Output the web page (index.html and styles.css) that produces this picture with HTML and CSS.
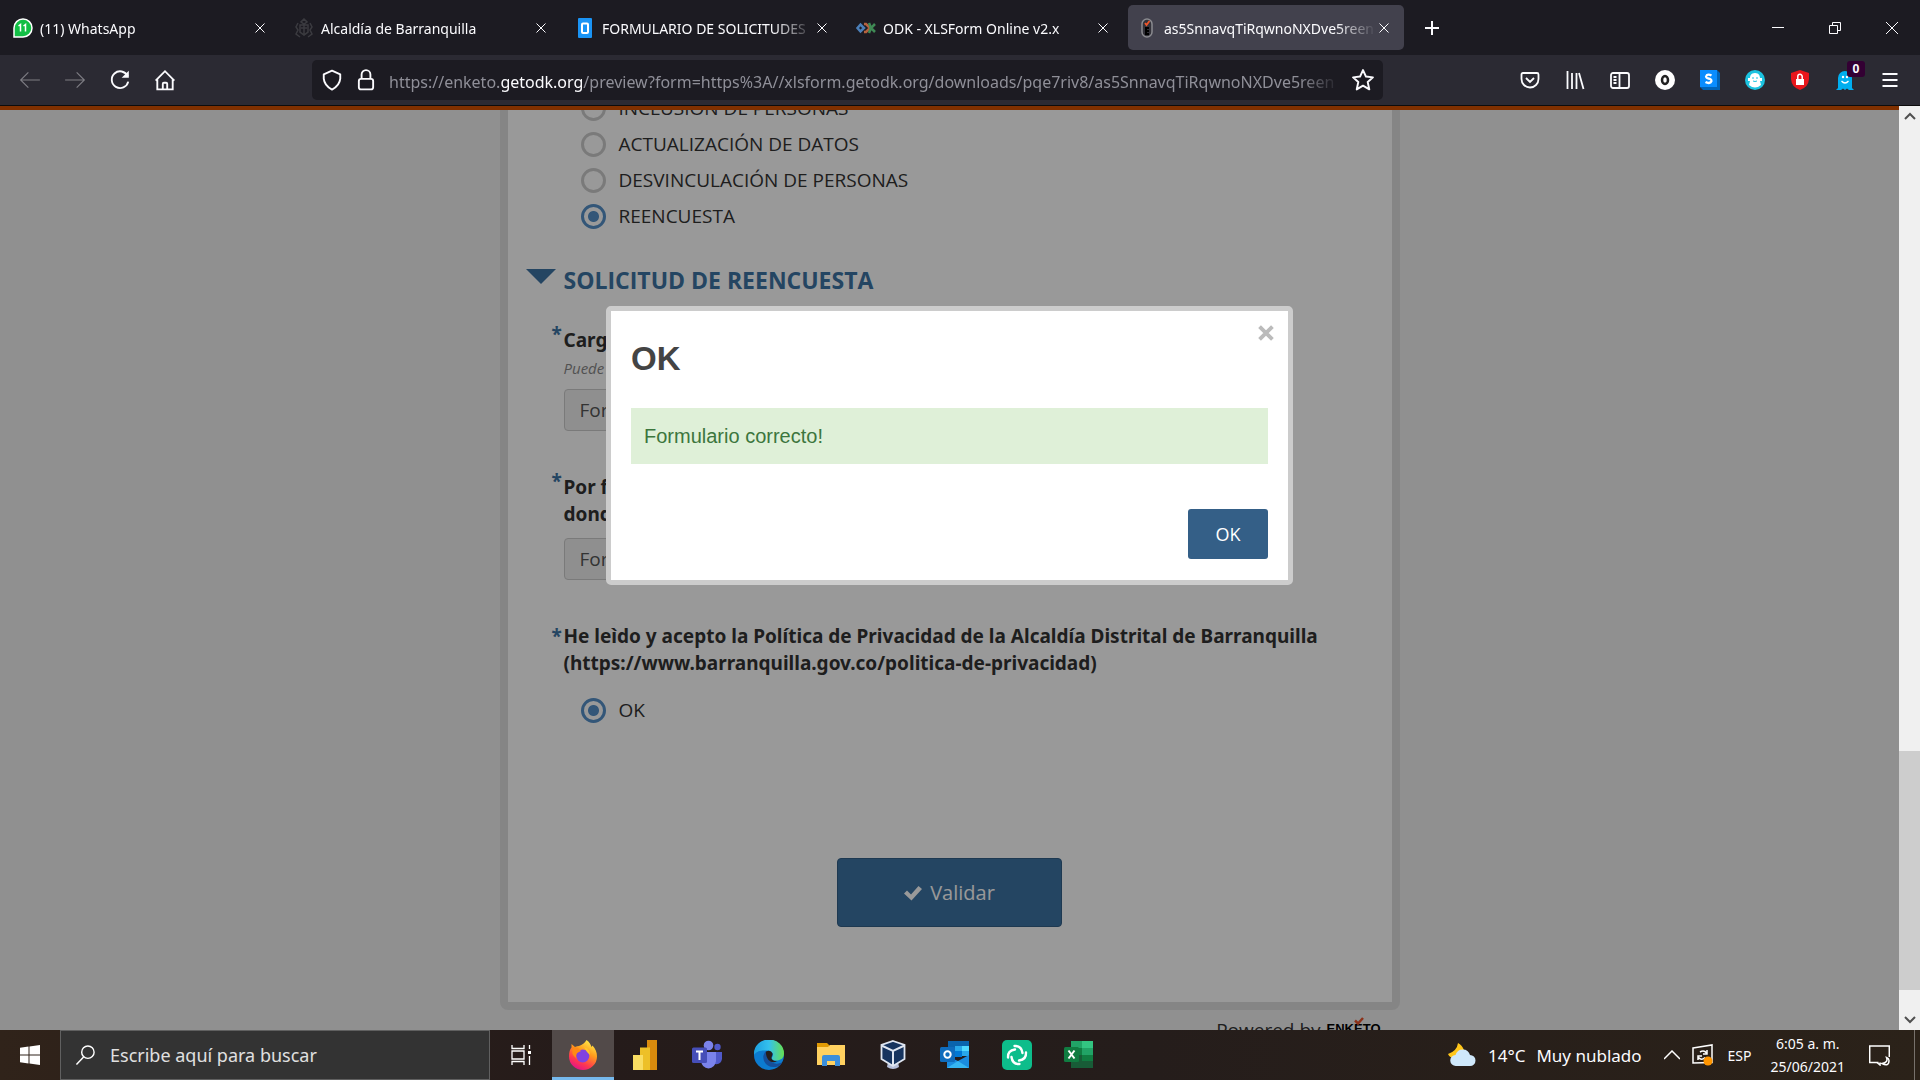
FILE: index.html
```html
<!DOCTYPE html>
<html lang="es">
<head>
<meta charset="utf-8">
<meta name="viewport" content="width=device-width, initial-scale=1">
<title>Formulario</title>
<link rel="stylesheet" href="styles.css">
</head>
<body>
<header class="browser">
  <div class="tabbar">
    <div class="tab">
      <svg class="favicon" viewBox="0 0 20 20"><path d="M1 19V10a9 9 0 1 1 9 9z" fill="#12bf45" stroke="#fff" stroke-width="1.5"/><path d="M5.500 8l2-1.500v7M10.500 8l2-1.500v7" fill="none" stroke="#fff" stroke-width="1.500"/></svg>
      <span class="tab-title">(11) WhatsApp</span>
      <button class="tab-close" aria-label="Cerrar"><svg viewBox="0 0 10 10"><path d="M.5.5l9 9M9.500.5l-9 9"/></svg></button>
    </div>
    <div class="tab">
      <svg class="favicon" viewBox="0 0 20 20" fill="none" stroke="#3b3b40" stroke-width="1.500"><path d="M10 1l3 3-3 2-3-2zM6 7h8v7l-4 3-4-3zM4 5l-2 4 2 3-2 4 4 3M16 5l2 4-2 3 2 4-4 3M7 10h6M10 7v9"/></svg>
      <span class="tab-title">Alcaldía de Barranquilla</span>
      <button class="tab-close" aria-label="Cerrar"><svg viewBox="0 0 10 10"><path d="M.5.5l9 9M9.500.5l-9 9"/></svg></button>
    </div>
    <div class="tab">
      <svg class="favicon" viewBox="0 0 20 20"><rect x="3" width="14" height="20" rx="1" fill="#1a94f5"/><rect x="7" y="5.500" width="6" height="9.500" rx="1" fill="none" stroke="#fff" stroke-width="2"/></svg>
      <span class="tab-title">FORMULARIO DE SOLICITUDES</span>
      <button class="tab-close" aria-label="Cerrar"><svg viewBox="0 0 10 10"><path d="M.5.5l9 9M9.500.5l-9 9"/></svg></button>
    </div>
    <div class="tab">
      <svg class="favicon" viewBox="0 0 20 20" fill="none" stroke-width="2.500"><path d="M1.500 10L4.500 6.500 8 10l-3.500 3.500z" stroke="#4b7fb8"/><path d="M8 6h2l4 4-4 4H8" stroke="#b5623f"/><path d="M19 6l-4 4 4 4M13 5l2 5-2 5" stroke="#3f8a55"/></svg>
      <span class="tab-title">ODK - XLSForm Online v2.x</span>
      <button class="tab-close" aria-label="Cerrar"><svg viewBox="0 0 10 10"><path d="M.5.5l9 9M9.500.5l-9 9"/></svg></button>
    </div>
    <div class="tab tab-active">
      <svg class="favicon" viewBox="0 0 20 20"><rect x="5" y="1" width="10" height="18" rx="5" fill="#33323a" stroke="#8b8b90" stroke-width="1.500"/><path d="M8 5l1.500 2 3-4" fill="none" stroke="#f0562a" stroke-width="1.800"/><path d="M12 10H9v6h3M9 13h3" fill="none" stroke="#000" stroke-width="2"/></svg>
      <span class="tab-title">as5SnnavqTiRqwnoNXDve5reen</span>
      <button class="tab-close" aria-label="Cerrar"><svg viewBox="0 0 10 10"><path d="M.5.5l9 9M9.500.5l-9 9"/></svg></button>
    </div>
    <button class="new-tab" aria-label="Nueva pestaña"><svg viewBox="0 0 16 16"><path d="M8 1v14M1 8h14"/></svg></button>
    <div class="window-buttons">
      <button aria-label="Minimizar"><svg viewBox="0 0 14 14"><path d="M1 6.500h12"/></svg></button>
      <button aria-label="Restaurar"><svg viewBox="0 0 14 14"><path d="M1.500 4.500h8v8h-8zM4.500 4.500v-3h8v8h-3"/></svg></button>
      <button aria-label="Cerrar ventana"><svg viewBox="0 0 14 14"><path d="M1 1l12 12M13 1L1 13"/></svg></button>
    </div>
  </div>
  <div class="toolbar">
    <div class="nav-buttons">
      <button class="dim" aria-label="Atrás"><svg viewBox="0 0 20 20"><path d="M19 10H1.500M8.500 3l-7 7 7 7"/></svg></button>
      <button class="dim" aria-label="Adelante"><svg viewBox="0 0 20 20"><path d="M1 10h17.500M11.500 3l7 7-7 7"/></svg></button>
      <button aria-label="Recargar"><svg viewBox="0 0 20 20"><path d="M17 6.500A7.600 7.600 0 1 0 17.500 11.500" stroke-width="1.700"/><path d="M18 1.500v6.500h-6.500z" fill="#fbfbfe" stroke="none"/></svg></button>
      <button aria-label="Inicio"><svg viewBox="0 0 20 20" stroke-width="1.700"><path d="M1.500 10.500L10 2l8.500 8.500M3 9v9.500h14V9M8 18.500v-5q0-1 1-1h2q1 0 1 1v5"/></svg></button>
    </div>
    <div class="urlbar">
      <svg viewBox="0 0 20 20" stroke-width="1.700"><path d="M10 1.500l7.500 3.300v4Q17 15 10 18.700 3 15 2.500 8.800v-4z" stroke-linejoin="round"/></svg>
      <svg viewBox="0 0 20 20" stroke-width="1.700"><rect x="3.500" y="9" width="13" height="9.500" rx="2"/><path d="M6 9V5a4 4 0 0 1 8 0v4"/></svg>
      <span class="url">https://enketo.<b>getodk.org</b>/preview?form=https%3A//xlsform.getodk.org/downloads/pqe7riv8/as5SnnavqTiRqwnoNXDve5reen</span>
      <svg viewBox="0 0 20 20" stroke-width="1.800"><path d="M10 1l2.700 5.900 6.300.7-4.700 4.300 1.400 6.600L10 15.200l-5.700 3.300 1.400-6.600L1 7.600l6.300-.7z" stroke-linejoin="round"/></svg>
    </div>
    <div class="extensions">
      <button aria-label="Pocket"><svg viewBox="0 0 20 20" stroke-width="1.800"><path d="M3 3h14q1.500 0 1.500 1.500V9a8.500 8.500 0 0 1-17 0V4.500Q1.500 3 3 3zM6 8l4 4 4-4"/></svg></button>
      <button aria-label="Biblioteca"><svg viewBox="0 0 20 20" stroke-width="1.800"><path d="M2.500 1v18M7 3v16M11.500 3v16M14 3l4.500 16"/></svg></button>
      <button aria-label="Barra lateral"><svg viewBox="0 0 20 20" stroke-width="1.800"><rect x="1" y="3" width="18" height="15" rx="2"/><path d="M9.500 3v15M3.500 7h3M3.500 10h3M3.500 13h3"/></svg></button>
      <button aria-label="Extensión O"><svg viewBox="0 0 20 20"><circle cx="10" cy="10" r="10" fill="#fff" stroke="none"/><ellipse cx="10" cy="10" rx="3" ry="4" stroke="#222" stroke-width="2.500"/></svg></button>
      <button aria-label="Extensión S"><svg viewBox="0 0 20 20" stroke="none"><path d="M0 17l3 3h17V3l-3-3z" fill="#0063b8"/><path d="M0 0h17v17H0z" fill="#0a8dff"/><path d="M11.500 5.500Q8.500 3.800 6.800 5.200c-1.800 1.800 0 3 1.700 3.300 2.500.4 4 2.200 2.200 3.800Q8.500 13.800 5.500 12" fill="none" stroke="#fff" stroke-width="2.300"/></svg></button>
      <button aria-label="Extensión mono"><svg viewBox="0 0 20 20" stroke="none"><circle cx="10" cy="10" r="10" fill="#1cc3e0"/><path d="M10 3c4 0 5 3 5 5h2v3h-2l1 4q-6 5-12 0l1-4H3V8h2c0-2 1-5 5-5z" fill="#fff"/><path d="M7 8h2M11 8h2M8 11q2 1 4 0" stroke="#1cc3e0" fill="none"/></svg></button>
      <button aria-label="Bloqueador"><svg viewBox="0 0 20 20" stroke="none"><path d="M10 0l9 3v6q-.5 8-9 11Q1.500 17 1 9V3z" fill="#e8161b"/><path d="M6 9h8v6H6z" fill="#fff"/><path d="M7.800 9V6.500a2.200 2.200 0 0 1 4.400 0V9" fill="none" stroke="#fff" stroke-width="1.500"/></svg></button>
      <button class="ghost" aria-label="Ghostery"><svg viewBox="0 0 20 20" stroke="none"><path d="M3 18V8a7 7 0 0 1 14 0v10l2 2h-5l-2-1.500-2 1.500-2-1.500L6 20H1z" fill="#00aef0"/><circle cx="8" cy="7" r="1.200" fill="#fff"/><circle cx="12" cy="7" r="1.200" fill="#fff"/><path d="M6.500 11q3.500 4 7 0" fill="none" stroke="#fff" stroke-width="1.300"/></svg><span class="badge">0</span></button>
      <button aria-label="Menú"><svg viewBox="0 0 20 20" stroke-width="1.800"><path d="M2.500 4h15M2.500 10h15M2.500 16h15"/></svg></button>
    </div>
  </div>
</header>

<div class="viewport">
  <main class="page">
    <form class="form">
      <div class="choices">
        <label><input type="radio" name="tipo">INCLUSIÓN DE PERSONAS</label>
        <label><input type="radio" name="tipo">ACTUALIZACIÓN DE DATOS</label>
        <label><input type="radio" name="tipo">DESVINCULACIÓN DE PERSONAS</label>
        <label><input type="radio" name="tipo" checked>REENCUESTA</label>
      </div>
      <h2 class="group-title"><svg viewBox="0 0 30 15"><path d="M0 0h30L15 15z"/></svg>SOLICITUD DE REENCUESTA</h2>
      <div class="question">
        <label class="question-label" for="f1"><span class="required required-high">*</span>Cargue</label>
        <p class="hint">Puede</p>
        <input class="file" id="f1" type="text" value="Formato" readonly>
      </div>
      <div class="question">
        <label class="question-label" for="f2"><span class="required required-high">*</span>Por favor<br>donde</label>
        <input class="file" id="f2" type="text" value="Formato" readonly>
      </div>
      <div class="question">
        <p class="question-label"><span class="required">*</span>He leìdo y acepto la Política de Privacidad de la Alcaldía Distrital de Barranquilla<br>(https://www.barranquilla.gov.co/politica-de-privacidad)</p>
        <div class="choices"><label><input type="radio" name="acepto" checked>OK</label></div>
      </div>
      <button class="validate" type="button"><svg viewBox="0 0 18 16"><path d="M0 8.500L3 5.500l4 4L14.500 1 18 4 7.500 15.500z"/></svg>Validar</button>
    </form>
    <footer class="powered">Powered by <span class="enketo">ENKETO<svg viewBox="0 0 10 8"><path d="M1 3.500l3 3L9 1" fill="none" stroke="#e9532b" stroke-width="2.500"/></svg></span></footer>
    <div class="overlay">
      <section class="dialog" role="dialog" aria-labelledby="dialog-title">
        <button class="dialog-close" aria-label="Cerrar"><svg viewBox="0 0 14 14"><path d="M2 2l10 10M12 2L2 12"/></svg></button>
        <h3 id="dialog-title">OK</h3>
        <p class="alert">Formulario correcto!</p>
        <button class="dialog-ok">OK</button>
      </section>
    </div>
  </main>
  <div class="scrollbar">
    <svg viewBox="0 0 12 8"><path d="M1 7l5-5 5 5"/></svg>
    <div class="track"><div class="thumb"></div></div>
    <svg viewBox="0 0 12 8"><path d="M1 1l5 5 5-5"/></svg>
  </div>
</div>

<footer class="taskbar">
  <button class="start" aria-label="Inicio"><svg viewBox="0 0 20 20" fill="#fff"><path d="M0 2.800L8.500 1.500v8H0zM9.500 1.400L20 0v9.500H9.500zM0 10.500h8.500v8L0 17.200zM9.500 10.500H20V20L9.500 18.600z"/></svg></button>
  <label class="search"><svg viewBox="0 0 22 22"><circle cx="13.500" cy="8" r="6.500"/><path d="M9 13l-7.500 8"/></svg><input type="text" placeholder="Escribe aquí para buscar" aria-label="Buscar"></label>
  <div class="apps">
    <button aria-label="Vista de tareas"><svg class="small" viewBox="0 0 20 20" fill="none" stroke="#fff" stroke-width="1.300"><path d="M1 0v3.500h12V0M1 20v-3.500h12V20M1 6h12v8H1zM18.500 0v4M18.500 11v9"/><path d="M17 6h3v3h-3z" fill="#fff" stroke="none"/></svg></button>
    <button class="running" aria-label="Firefox"><svg viewBox="0 0 30 30"><defs><linearGradient id="ff" x1=".8" y1="0" x2=".3" y2="1"><stop offset="0" stop-color="#fff44f"/><stop offset=".4" stop-color="#ff9b1c"/><stop offset=".75" stop-color="#ff3750"/><stop offset="1" stop-color="#e0118c"/></linearGradient></defs><path d="M18.500 0c3 2 4 4 5 7l1-1.500c3 3 4.500 7 4.500 11a14 13.500 0 0 1-28 0C1 12 2 9 3.500 7.500V4L7 7q2-1 4-1c3-1 6-3 7.500-6z" fill="url(#ff)"/><circle cx="14.800" cy="16" r="6.500" fill="#8142e0"/><path d="M5 7l5 1 3 3-4 2q-2 3 0 6-7-5-4-12z" fill="#ff8a16"/><path d="M16 7q6 2 6 8l-3-3z" fill="#ffc62b"/></svg></button>
    <button aria-label="Power BI"><svg viewBox="0 0 30 30"><path d="M17 0h10v30H17z" fill="#d98b0d"/><path d="M10 7.500h10V30H10z" fill="#edc028"/><path d="M3 15h10v15H3z" fill="#f9dd62"/></svg></button>
    <button aria-label="Teams"><svg viewBox="0 0 30 30"><circle cx="16.500" cy="5.500" r="4.800" fill="#7b83eb"/><circle cx="25.500" cy="7" r="3.200" fill="#5059c9"/><path d="M21 12h9v7q-1 6-7 5z" fill="#5059c9"/><path d="M9 12h15v9q-1 7-7.500 7.500Q10 28 9 21z" fill="#7b83eb"/><rect y="7.500" width="15" height="15.500" rx="1.500" fill="#464eb8"/><path d="M4 11.500h7M7.500 11.500V20" stroke="#fff" stroke-width="2"/></svg></button>
    <button aria-label="Edge"><svg viewBox="0 0 30 30"><defs><linearGradient id="eg"><stop offset="0" stop-color="#1c9fe0"/><stop offset=".5" stop-color="#34c1ed"/><stop offset="1" stop-color="#66e050"/></linearGradient></defs><circle cx="15" cy="15" r="15" fill="#0c7bd0"/><path d="M0 13.500a15 14 0 0 1 30 0c0 5-4 7-7.500 7s-5.500-1-4.500-3c3-4-1-7-5-7S3 10 0 15z" fill="url(#eg)"/><path d="M12 11q-4 4-2 10 4 8 14 5.500 3-1 4-4-6 2.500-10.500-.5Q12 18 12 11z" fill="#154f9b"/><path d="M12 11.500q5-2 6.500 2c.5 2-1.500 3-1 5s4 3 6 2.500q-5 3-9-1-3-4-2.500-8.500z" fill="#261e1c"/></svg></button>
    <button aria-label="Explorador"><svg viewBox="0 0 30 30"><path d="M1 3h10l3 3v6H1z" fill="#e09a04"/><path d="M1 7h11l2-2h15v20H1z" fill="#ffd160"/><path d="M6 26V17q0-2 2-2h14q2 0 2 2v9h-5v-5h-8v5z" fill="#3b8edb"/></svg></button>
    <button aria-label="VirtualBox"><svg viewBox="0 0 30 30"><path d="M10 22l10 0 1 5q-6 4-12 0z" fill="#b5bfda"/><path d="M15 1l11.500 4v14L15 26 3.500 19V5z" fill="#16345f" stroke="#dfe6f1" stroke-width="1.800"/><path d="M3.500 5.500L15 11l11.500-5.500M15 11v14" fill="none" stroke="#dfe6f1" stroke-width="2"/></svg></button>
    <button aria-label="Outlook"><svg viewBox="0 0 30 30"><path d="M8 1h21v15H8z" fill="#0a64ad"/><path d="M15 6h7v5h-7z" fill="#28a8ea"/><path d="M22 6h7v5h-7z" fill="#50d9ff"/><path d="M15 11h7v6h-7z" fill="#0078d4"/><path d="M22 11h7v5h-7z" fill="#28a8ea"/><path d="M7 16l11 5 11-6v13H7z" fill="#1a8ce0"/><path d="M29 28H7l11-7z" fill="#35b5f2"/><rect y="7" width="15" height="15" rx="1.500" fill="#0f6cbd"/><circle cx="7.500" cy="14.500" r="3.200" fill="none" stroke="#fff" stroke-width="2"/></svg></button>
    <button aria-label="Element"><svg viewBox="0 0 30 30"><rect width="30" height="30" rx="5" fill="#0dbd8b"/><g fill="none" stroke="#fff" stroke-width="2.400" stroke-linecap="round"><path d="M12.500 6q7-.5 8 7"/><path d="M24 12.500q.5 7-7 8"/><path d="M17.500 24q-7 .5-8-7"/><path d="M6 17.500q-.5-7 7-8"/></g></svg></button>
    <button aria-label="Excel"><svg viewBox="0 0 30 30"><path d="M7 1h22v27H7z" fill="#185c37"/><path d="M7 1h11v7H7z" fill="#21a366"/><path d="M18 1h11v7H18z" fill="#33c481"/><path d="M7 8h11v7H7z" fill="#107c41"/><path d="M18 8h11v7H18z" fill="#21a366"/><path d="M18 15h11v6H18z" fill="#107c41"/><rect y="7" width="15" height="15" rx="1.500" fill="#107c41"/><path d="M4.500 10.500l6 8M10.500 10.500l-6 8" stroke="#fff" stroke-width="2"/></svg></button>
  </div>
  <div class="tray">
    <svg class="weather" viewBox="0 0 28 24"><path d="M10 0q-1 8-10 11 2 5 8 4l8-8q-2-5-6-7z" fill="#ffc61a"/><path d="M8 23a5.500 5.500 0 0 1-.5-11 7.500 7.500 0 0 1 14.500 0 5.500 5.500 0 0 1 0 11z" fill="#cfe8fb"/></svg>
    <span class="forecast"><span>14°C</span><span>Muy nublado</span></span>
    <svg class="chevron" viewBox="0 0 16 10"><path d="M0 9l8-8 8 8"/></svg>
    <svg class="update" viewBox="0 0 22 22"><path d="M1 4l19-3v17.500L1 19z"/><path d="M15 6v4h-4M14.500 9Q12 5.500 8 8M6 16v-4h4M6.500 13.500q3 3.500 6.500 0"/><circle cx="16" cy="17" r="4.500"/></svg>
    <span class="lang">ESP</span>
    <time class="clock">6:05 a. m.<br>25/06/2021</time>
    <svg class="notify" viewBox="0 0 21 21"><path d="M9.500 17.500H.7V1h19.600v11"/><path d="M8 17.500l3 2.500v-2.500M17.500 12.500q2 5-4.500 6 7 3.500 7-3 0-2-2.500-3z"/></svg>
    <span class="show-desktop"></span>
  </div>
</footer>
</body>
</html>
```
FILE: styles.css
```css
* { box-sizing: border-box; }

body {
  margin: 0;
  height: 100vh;
  display: flex;
  flex-direction: column;
  overflow: hidden;
  font-family: "Noto Sans", sans-serif;
  color: #fbfbfe;
}

h2, h3, p { margin: 0; }

button {
  display: flex;
  align-items: center;
  justify-content: center;
  padding: 0;
  border: 0;
  background: none;
  color: inherit;
  font: inherit;
}

/* Browser window */
.browser { flex: none; background: #2b2a33; border-bottom: 1px solid #0c0c0d; }

.tabbar {
  display: flex;
  align-items: center;
  gap: 5px;
  height: 55px;
  padding-left: 4px;
  background: #1c1b22;
}

.tab {
  flex: 0 1 276px;
  min-width: 0;
  display: flex;
  align-items: center;
  height: 45px;
  padding: 0 12px 0 9px;
  border-radius: 5px;
  font-size: 14px;
}
.tab-active { background: #42414d; }
.favicon { flex: none; width: 20px; height: 20px; margin-right: 7px; }
.tab-title {
  flex: 1;
  overflow: hidden;
  white-space: nowrap;
  padding-top: 1px;
  mask-image: linear-gradient(to left, transparent, #000 40px);
}
.tab-close { flex: none; width: 16px; height: 24px; }
.tab-close svg { width: 10px; height: 10px; }
.tab-close path, .new-tab path, .window-buttons path { fill: none; stroke: #fbfbfe; }
.new-tab { width: 46px; height: 45px; }
.new-tab svg { width: 16px; height: 16px; }
.new-tab path { stroke-width: 2; }

.window-buttons { display: flex; margin-left: auto; }
.window-buttons button { width: 57px; height: 55px; }
.window-buttons svg { width: 14px; height: 14px; }

.toolbar { display: flex; align-items: center; height: 50px; padding: 0 8px 0 7px; }
.toolbar svg { flex: none; width: 22px; height: 22px; fill: none; stroke: #fbfbfe; }
.nav-buttons, .extensions { display: flex; }
.nav-buttons button, .extensions button { width: 45px; height: 40px; }
.extensions svg { width: 20px; height: 20px; }
.toolbar .extensions svg[stroke="none"] { stroke: none; }
.dim { opacity: .4; }

.urlbar {
  flex: 1;
  min-width: 0;
  display: flex;
  align-items: center;
  gap: 12px;
  height: 40px;
  margin: 0 124px 0 125px;
  padding: 0 9px;
  border-radius: 5px;
  background: #1c1b22;
}
.url {
  flex: 1;
  overflow: hidden;
  padding-top: 3px;
  white-space: nowrap;
  font-size: 16px;
  color: #8f8f98;
  mask-image: linear-gradient(to left, transparent, #000 40px);
}
.url b { font-weight: 400; color: #fbfbfe; }

.ghost { position: relative; }
.badge {
  position: absolute;
  top: 1px;
  right: 2px;
  width: 18px;
  border-radius: 3px;
  background: #330033;
  font-size: 12px;
  font-weight: 700;
  line-height: 16px;
}

/* Web page */
.viewport { flex: 1; min-height: 0; display: flex; }
.page {
  position: relative;
  flex: 1;
  overflow: hidden;
  border-top: 4px solid #803000;
  background: #f0f0f0;
  color: #333;
  font-family: "Open Sans", sans-serif;
  font-size: 19px;
}
.form {
  max-width: 900px;
  margin: -28px auto 0;
  padding: 0 18px 75px;
  border: 8px solid #dedede;
  border-radius: 8px;
  background: #fff;
}

.choices { padding-left: 17px; }
.form > .choices { padding-left: 55px; }
.choices label { display: flex; align-items: center; gap: 13px; height: 36px; }
.choices input {
  appearance: none;
  width: 25px;
  height: 25px;
  margin: 0;
  border: 3px solid #ccc;
  border-radius: 50%;
}
.choices input:checked {
  border-color: #5590c8;
  background: radial-gradient(circle, #5590c8 5px, transparent 6px);
}

.group-title {
  display: flex;
  gap: 8px;
  margin-top: 30px;
  font-size: 23px;
  line-height: 32px;
  color: #3c73a3;
}
.group-title svg { width: 30px; height: 15px; margin-top: 5px; fill: #3c73a3; }

.question { margin: 43px 0 0 38px; }
.group-title + .question { margin-top: 31px; }
.question-label {
  position: relative;
  display: block;
  font-family: "Noto Sans", sans-serif;
  font-weight: 700;
  line-height: 27px;
}
.required { position: absolute; left: -12px; color: #3c73a3; }
.required-high { top: -6px; }
.hint { margin-top: 4px; font-size: 15px; font-style: italic; line-height: 21px; color: #888; }
.file {
  display: block;
  width: 50%;
  height: 42px;
  margin-top: 10px;
  padding: 0 15px;
  border: 1px solid #ccc;
  border-radius: 4px;
  background: #eee;
  color: #555;
  font: inherit;
}
.question .choices { margin-top: 15px; }

.validate {
  gap: 8px;
  width: 225px;
  height: 69px;
  margin: 130px auto 0;
  border: 1px solid #335f87;
  border-radius: 4px;
  background: #3c73a3;
  color: #fff;
  font-size: 20px;
}
.validate svg { width: 18px; height: 16px; fill: #fff; }

.powered {
  display: flex;
  justify-content: flex-end;
  gap: 6px;
  max-width: 900px;
  margin: 7px auto 0;
  padding-right: 19px;
  line-height: 26px;
}
.enketo { position: relative; color: #000; font: 700 13px/24px "Liberation Sans", sans-serif; }
.enketo svg { position: absolute; left: 27px; top: 0; width: 10px; height: 8px; }

/* Dialog */
.overlay {
  position: absolute;
  inset: 0;
  display: flex;
  justify-content: center;
  align-items: flex-start;
  padding-top: 196px;
  background: rgba(0, 0, 0, .4);
}
.dialog {
  position: relative;
  width: 687px;
  padding: 28px 20px 21px;
  border: 5px solid #ccc;
  border-radius: 5px;
  background: #fff;
}
.dialog h3 { font: 700 33px/40px "Liberation Sans", sans-serif; color: #444; }
.dialog-close { position: absolute; top: 13px; right: 13px; width: 18px; height: 18px; }
.dialog-close svg { width: 18px; height: 18px; }
.dialog-close path { stroke: #bbb; stroke-width: 3; }
.alert {
  margin-top: 29px;
  padding: 0 13px;
  background: #dff0d8;
  color: #3c763d;
  font: 20px/56px "Liberation Sans", sans-serif;
}
.dialog-ok {
  width: 80px;
  height: 50px;
  margin: 45px 0 0 auto;
  border-radius: 3px;
  background: #345f87;
  color: #fff;
  font-size: 18px;
}

.scrollbar {
  flex: none;
  width: 21px;
  display: flex;
  flex-direction: column;
  align-items: center;
  padding: 6px 0;
  background: #f0f0f0;
}
.scrollbar svg { width: 12px; height: 8px; fill: none; stroke: #505050; stroke-width: 2; }
.track { flex: 1; align-self: stretch; display: flex; flex-direction: column; justify-content: flex-end; padding-bottom: 26px; }
.thumb { height: 27.5%; background: #cdcdcd; }

/* Taskbar */
.taskbar {
  flex: none;
  display: flex;
  align-items: center;
  height: 50px;
  background: linear-gradient(90deg, #30231a, #251b1a 30%, #251d1b 60%, #2b2219);
}
.start { width: 60px; height: 50px; }
.start svg { width: 20px; height: 20px; }
.search {
  flex: 0 1 430px;
  display: flex;
  align-items: center;
  gap: 14px;
  height: 50px;
  padding-left: 14px;
  border: 1px solid #606060;
  background: #333;
}
.search svg { flex: none; width: 21px; height: 22px; fill: none; stroke: #fff; stroke-width: 1.5; }
.search input { flex: 1; min-width: 0; padding: 0; border: 0; background: none; font: inherit; font-size: 18px; }
.search input::placeholder { color: #e0e0e0; opacity: 1; }
.apps { display: flex; }
.apps button { width: 62px; height: 50px; }
.apps svg { width: 30px; height: 30px; }
.apps .small { width: 20px; height: 20px; }
.running { background: #524a49; border-bottom: 3px solid #76b9ed; border-top: 3px solid #524a49; }

.tray { display: flex; align-items: center; margin-left: auto; font-size: 14px; }
.tray svg { fill: none; stroke: #fff; stroke-width: 1.5; }
.tray .weather { width: 28px; height: 24px; margin-right: 12px; stroke: none; }
.forecast { display: flex; gap: 11px; font-size: 17px; }
.tray .chevron { width: 16px; height: 10px; margin: 0 12px 0 22px; }
.update { width: 22px; height: 22px; margin-right: 14px; }
.tray .update circle { fill: #ff9500; stroke: none; }
.clock { margin: 0 24px 0 19px; line-height: 23px; text-align: center; }
.notify { width: 21px; height: 21px; }
.show-desktop { width: 1px; height: 50px; margin: 0 5px 0 24px; background: #77716c; }
```
